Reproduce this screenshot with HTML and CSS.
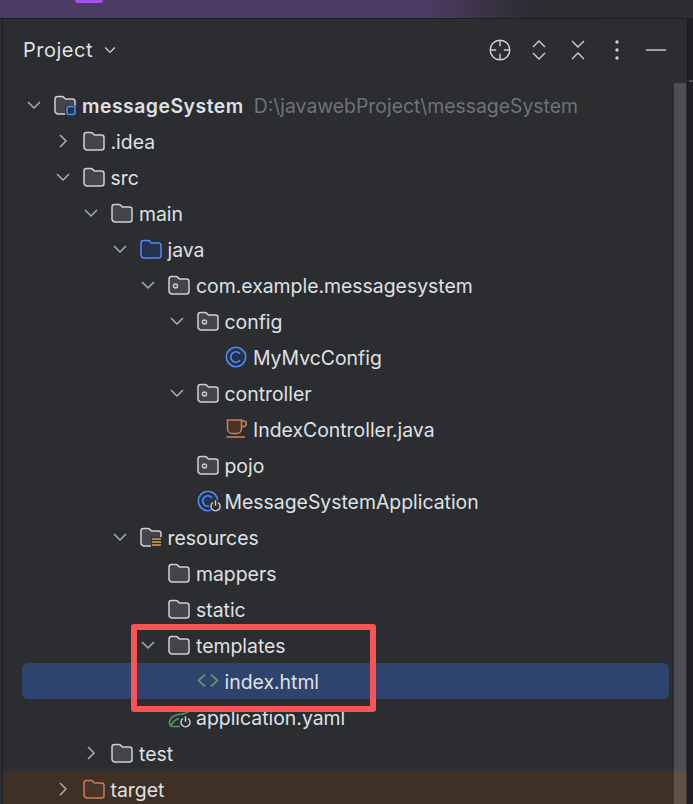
FILE: index.html
```html
<!DOCTYPE html>
<html lang="en">
<head>
  <meta charset="UTF-8" />
  <title>Project</title>
  <link rel="stylesheet" href="styles.css">
</head>
<body>

  <svg class="sprites" width="0" height="0">
    <symbol id="chev-down" viewBox="0 0 20 20"><path d="M4 7l6 6 6-6"/></symbol>
    <symbol id="chev-right" viewBox="0 0 20 20"><path d="M7 4l6 6-6 6"/></symbol>
    <symbol id="folder" viewBox="0 0 22 22"><path d="M3.500 2.500h4.600c.5 0 1 .2 1.400.6l2 2h7c1.400 0 2.500 1.100 2.500 2.500v9.900c0 1.400-1.100 2.500-2.500 2.500h-15C2.100 19.500 1 18.400 1 17V5c0-1.400 1.100-2.500 2.500-2.500z"/></symbol>
    <symbol id="coffee" viewBox="0 0 22 22"><path d="M2.500 2h14v8.500c0 2.800-2.200 5-5 5h-4c-2.800 0-5-2.200-5-5z"/><path d="M16.500 3h2.300c1.400 0 2.400 1 2.400 2.500S20.200 8.500 18.800 8.500h-2.300" fill="none"/><path d="M1.500 19h18.500" fill="none"/></symbol>
    <symbol id="cls" viewBox="0 0 22 22"><circle cx="11" cy="11" r="9.700"/><path class="glyph" d="M15 7.700a5.200 5.200 0 1 0 0 6.600"/></symbol>
    <symbol id="power" viewBox="0 0 12 12"><circle class="knock" cx="6" cy="6" r="6"/><path d="M3.700 2.800a4.200 4.200 0 1 0 4.600 0M6 .8v5"/></symbol>
  </svg>

  <div class="titlebar"><div class="pill"></div></div>

  <div class="workspace">
    <div class="edge"></div>

    <div class="panel">
      <div class="panel-head">
        <span class="panel-title">Project</span>
        <svg class="head-chev"><use href="#chev-down"/></svg>
        <div class="actions">
          <svg viewBox="0 0 22 22"><circle cx="11" cy="11" r="9.800"/><path d="M11 1.200v6M11 14.800v6M1.200 11h6M14.800 11h6"/></svg>
          <svg viewBox="0 0 22 22"><path d="M5 8l6-6 6 6M5 14l6 6 6-6"/></svg>
          <svg viewBox="0 0 22 22"><path d="M5 2l6 6 6-6M5 20l6-6 6 6"/></svg>
          <svg viewBox="0 0 22 22"><circle class="dot" cx="11" cy="3" r="1.700"/><circle class="dot" cx="11" cy="11" r="1.700"/><circle class="dot" cx="11" cy="19" r="1.700"/></svg>
          <svg viewBox="0 0 22 22"><path d="M1 11h20"/></svg>
        </div>
      </div>

      <div class="tree">
        <div class="row d0">
          <svg class="chev"><use href="#chev-down"/></svg>
          <svg class="icon" viewBox="0 0 22 22">
            <use class="folder" href="#folder"/>
            <rect class="knock" x="11" y="11" width="11" height="11" rx="3"/>
            <rect class="module-mark" x="13" y="12.500" width="8" height="8" rx="2"/>
          </svg>
          <span class="name root">messageSystem</span>
          <span class="path">D:\javawebProject\messageSystem</span>
        </div>
        <div class="row d1">
          <svg class="chev"><use href="#chev-right"/></svg>
          <svg class="icon folder"><use href="#folder"/></svg>
          <span class="name">.idea</span>
        </div>
        <div class="row d1">
          <svg class="chev"><use href="#chev-down"/></svg>
          <svg class="icon folder"><use href="#folder"/></svg>
          <span class="name">src</span>
        </div>
        <div class="row d2">
          <svg class="chev"><use href="#chev-down"/></svg>
          <svg class="icon folder"><use href="#folder"/></svg>
          <span class="name">main</span>
        </div>
        <div class="row d3">
          <svg class="chev"><use href="#chev-down"/></svg>
          <svg class="icon folder blue"><use href="#folder"/></svg>
          <span class="name">java</span>
        </div>
        <div class="row d4">
          <svg class="chev"><use href="#chev-down"/></svg>
          <svg class="icon folder" viewBox="0 0 22 22"><use href="#folder"/><circle class="pkg-dot" cx="7.500" cy="12" r="2"/></svg>
          <span class="name">com.example.messagesystem</span>
        </div>
        <div class="row d5">
          <svg class="chev"><use href="#chev-down"/></svg>
          <svg class="icon folder" viewBox="0 0 22 22"><use href="#folder"/><circle class="pkg-dot" cx="7.500" cy="12" r="2"/></svg>
          <span class="name">config</span>
        </div>
        <div class="row d6">
          <span class="chev"></span>
          <svg class="icon cls"><use href="#cls"/></svg>
          <span class="name">MyMvcConfig</span>
        </div>
        <div class="row d5">
          <svg class="chev"><use href="#chev-down"/></svg>
          <svg class="icon folder" viewBox="0 0 22 22"><use href="#folder"/><circle class="pkg-dot" cx="7.500" cy="12" r="2"/></svg>
          <span class="name">controller</span>
        </div>
        <div class="row d6">
          <span class="chev"></span>
          <svg class="icon coffee"><use href="#coffee"/></svg>
          <span class="name">IndexController.java</span>
        </div>
        <div class="row d5">
          <span class="chev"></span>
          <svg class="icon folder" viewBox="0 0 22 22"><use href="#folder"/><circle class="pkg-dot" cx="7.500" cy="12" r="2"/></svg>
          <span class="name">pojo</span>
        </div>
        <div class="row d5">
          <span class="chev"></span>
          <svg class="icon cls" viewBox="0 0 22 22">
            <use href="#cls"/>
            <svg class="power" x="12" y="9.500" width="13" height="13"><use href="#power"/></svg>
          </svg>
          <span class="name">MessageSystemApplication</span>
        </div>
        <div class="row d3">
          <svg class="chev"><use href="#chev-down"/></svg>
          <svg class="icon" viewBox="0 0 22 22">
            <use class="folder" href="#folder"/>
            <rect class="knock" x="11" y="11" width="11" height="11"/>
            <path class="res-lines" d="M12 13h9M12 16h9M12 19h9"/>
          </svg>
          <span class="name">resources</span>
        </div>
        <div class="row d4">
          <span class="chev"></span>
          <svg class="icon folder"><use href="#folder"/></svg>
          <span class="name">mappers</span>
        </div>
        <div class="row d4">
          <span class="chev"></span>
          <svg class="icon folder"><use href="#folder"/></svg>
          <span class="name">static</span>
        </div>
        <div class="row d4">
          <svg class="chev"><use href="#chev-down"/></svg>
          <svg class="icon folder"><use href="#folder"/></svg>
          <span class="name">templates</span>
        </div>
        <div class="row d5 selected">
          <span class="chev"></span>
          <svg class="icon html" viewBox="0 0 22 22"><path d="M8 4.500l-6.500 6 6.500 6M14 4.500l6.500 6-6.500 6"/></svg>
          <span class="name">index.html</span>
        </div>
        <div class="row d4">
          <span class="chev"></span>
          <svg class="icon yaml" viewBox="0 0 22 22">
            <path d="M20.500 5c-1 2.500-4 2.500-7 3C8 8.500 2.500 10.500 1.500 15.500c-.4 2.500 1 5 3.500 5h7"/>
            <path d="M3 20c1-3.500 3.500-6 8-7.500"/>
            <svg class="power" x="11" y="9.500" width="13" height="13"><use href="#power"/></svg>
          </svg>
          <span class="name">application.yaml</span>
        </div>
        <div class="row d2">
          <svg class="chev"><use href="#chev-right"/></svg>
          <svg class="icon folder"><use href="#folder"/></svg>
          <span class="name">test</span>
        </div>
        <div class="row d1 excluded">
          <svg class="chev"><use href="#chev-right"/></svg>
          <svg class="icon folder orange"><use href="#folder"/></svg>
          <span class="name">target</span>
        </div>
      </div>

      <div class="scrollbar"></div>
    </div>

    <div class="right-strip"><div class="strip-line"></div></div>
  </div>

  <div class="callout"></div>

</body>
</html>
```

FILE: styles.css
```css
:root {
  --panel-bg: #2b2d30;
  --gutter: #1e1f22;
  --text: #dfe1e5;
  --text-muted: #6f737a;
  --icon: #ced0d6;
  --folder-fill: #43454a;
  --blue: #548af7;
  --blue-fill: #25324d;
  --orange: #c77d55;
  --orange-fill: #4a3328;
  --green: #57965c;
  --font-main: 'Inter', 'Noto Sans', sans-serif;
}

html, body {
  margin: 0;
  height: 100%;
  overflow: hidden;
}

body {
  position: relative;
  background: var(--gutter);
  font-family: var(--font-main);
  color: var(--text);
}

.sprites {
  position: absolute;
}

.titlebar {
  height: 18px;
  background: linear-gradient(90deg, #4c3b62 0, #4c3b62 62%, #2d2d33 76%, #2b2d30 100%);
}

.pill {
  width: 28px;
  height: 3px;
  margin-left: 75px;
  background: #a551ec;
  border-radius: 0 0 6px 6px;
}

.workspace {
  display: flex;
  height: 786px;
  border-top: 1px solid var(--gutter);
}

.edge {
  width: 2px;
  background: var(--panel-bg);
  border-right: 1px solid var(--gutter);
}

.panel {
  position: relative;
  width: 684px;
  background: var(--panel-bg);
}

.right-strip {
  flex: 1;
  padding: 61px 0 0 2px;
}

.strip-line {
  height: 2px;
  background: #4e5157;
}

/* header */

.panel-head {
  display: flex;
  align-items: center;
  height: 62px;
  margin-bottom: 6px;
  padding: 0 20px;
}

.panel-title {
  font-size: 20px;
  letter-spacing: 0.5px;
}

.head-chev {
  width: 16px;
  height: 16px;
  margin-left: 9px;
}

.head-chev use {
  fill: none;
  stroke: var(--icon);
  stroke-width: 1.700;
}

.actions {
  display: flex;
  gap: 17px;
  margin-left: auto;
}

.actions svg {
  width: 22px;
  height: 22px;
  fill: none;
  stroke: var(--icon);
  stroke-width: 1.400;
}

.actions .dot {
  fill: var(--icon);
  stroke: none;
}

/* tree */

.tree {
  padding: 0 18px 0 19px;
}

.row {
  display: flex;
  align-items: center;
  height: 36px;
  white-space: nowrap;
}

.d0 { padding-left: 2px; }
.d1 { padding-left: 30.500px; }
.d2 { padding-left: 59px; }
.d3 { padding-left: 87.500px; }
.d4 { padding-left: 116px; }
.d5 { padding-left: 144.500px; }
.d6 { padding-left: 173px; }

.chev {
  flex: none;
  width: 20px;
  height: 20px;
  margin-right: 10px;
  fill: none;
  stroke: #a8adbd;
  stroke-width: 1.500;
}

.icon {
  flex: none;
  width: 22px;
  height: 22px;
  margin-right: 6px;
  overflow: visible;
}

.name,
.path {
  padding-top: 2px;
  font-size: 19.400px;
}

.name.root {
  font-weight: 600;
  letter-spacing: 0.5px;
}

.path {
  margin-left: 10px;
  color: var(--text-muted);
}

.selected {
  background: #2e436e;
  border-radius: 6px;
}

.excluded {
  margin: 0 -18px 0 -19px;
  padding-left: 49.500px;
  background: #3e3024;
}

/* icon colours */

.folder {
  fill: var(--folder-fill);
  stroke: var(--icon);
  stroke-width: 1.500;
}

.folder.blue {
  fill: var(--blue-fill);
  stroke: var(--blue);
}

.folder.orange {
  fill: var(--orange-fill);
  stroke: var(--orange);
}

.knock {
  fill: var(--panel-bg);
  stroke: none;
}

.module-mark {
  fill: var(--blue-fill);
  stroke: var(--blue);
  stroke-width: 1.500;
}

.pkg-dot {
  fill: none;
  stroke: var(--icon);
  stroke-width: 1.400;
}

.res-lines {
  fill: none;
  stroke: #d9a343;
  stroke-width: 1.500;
}

.cls {
  fill: var(--blue-fill);
  stroke: var(--blue);
  stroke-width: 1.600;
}

.cls .glyph {
  fill: none;
}

.power {
  fill: none;
  stroke: var(--icon);
  stroke-width: 1.300;
}

.coffee {
  fill: var(--orange-fill);
  stroke: var(--orange);
  stroke-width: 1.600;
}

.html {
  fill: none;
  stroke: var(--green);
  stroke-width: 1.800;
}

.yaml {
  fill: none;
  stroke: var(--green);
  stroke-width: 1.700;
}

/* overlays */

.scrollbar {
  position: absolute;
  top: 64px;
  right: 1px;
  bottom: 0;
  width: 12px;
  background: rgba(255, 255, 255, 0.16);
}

.callout {
  position: absolute;
  left: 131px;
  top: 624px;
  width: 233px;
  height: 76px;
  border: 6px solid #f95454;
  border-radius: 3px;
}
```
